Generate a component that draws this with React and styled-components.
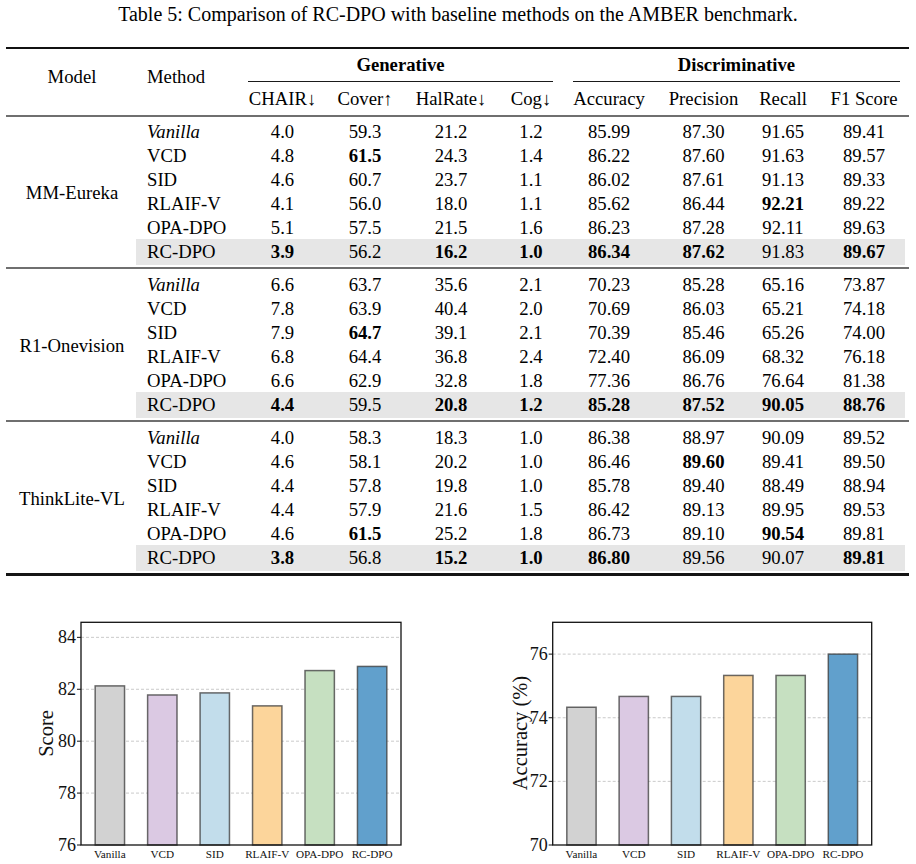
import React from "react";
import styled, { createGlobalStyle } from "styled-components";

const GlobalStyle = createGlobalStyle`
  html, body { margin: 0; padding: 0; background: #fff; }
  body { font-family: "Liberation Serif", "Times New Roman", serif; color: #000; }
`;

const NUM_COLS = "75px 90px 82px 78px 78px 111px 48px 98px";

const Page = styled.div`
  width: 916px;
  height: 864px;
  overflow: hidden;
  padding-top: 2px;
  box-sizing: border-box;
`;

const Caption = styled.div`
  text-align: center;
  font-size: 20px;
  line-height: 24px;
  height: 24px;
  margin-bottom: 21px;
`;

const Table = styled.div`
  margin-left: 6px;
  width: 903px;
  font-size: 18.7px;
  line-height: 24px;
`;

const Rule = styled.div`
  height: ${(p) => p.$h}px;
  background: ${(p) => p.$c};
`;

const Header = styled.div`
  display: flex;
  height: 66px;
`;

const HeadLabel = styled.div`
  width: ${(p) => p.$w}px;
  box-sizing: border-box;
  padding-top: 16px;
  padding-left: ${(p) => p.$pl || 0}px;
  text-align: ${(p) => p.$align};
`;

const HeadRight = styled.div`
  width: 660px;
  display: flex;
  flex-direction: column;
`;

const GroupHeads = styled.div`
  display: grid;
  grid-template-columns: 325px 335px;
  padding-top: 4px;
`;

const GroupHead = styled.div`
  margin: 0 ${(p) => p.$mr}px 0 ${(p) => p.$ml}px;
  text-align: center;
  font-weight: bold;
  padding-bottom: 4px;
  border-bottom: 1px solid #1a1a1a;
`;

const SubHeads = styled.div`
  display: grid;
  grid-template-columns: ${NUM_COLS};
  margin-top: 5px;
`;

const Cell = styled.div`
  display: flex;
  align-items: center;
  justify-content: center;
  white-space: nowrap;
  padding-left: ${(p) => p.$pl || 0}px;
  font-weight: ${(p) => (p.$bold ? "bold" : "normal")};
`;

const MethodCell = styled.div`
  display: flex;
  align-items: center;
  padding-left: 11px;
  white-space: nowrap;
  font-style: ${(p) => (p.$italic ? "italic" : "normal")};
`;

const GroupBlock = styled.div`
  display: flex;
  padding: ${(p) => p.$pt}px 0 2px 0;
`;

const ModelName = styled.div`
  width: 130px;
  box-sizing: border-box;
  padding-left: 2px;
  display: flex;
  align-items: center;
  justify-content: center;
  white-space: nowrap;
`;

const Rows = styled.div`
  width: 769px;
  display: flex;
  flex-direction: column;
`;

const Row = styled.div`
  display: grid;
  grid-template-columns: 109px ${NUM_COLS};
  height: ${(p) => (p.$hl ? 26 : 24)}px;
  margin-top: ${(p) => (p.$hl ? -1 : 0)}px;
  background: ${(p) => (p.$hl ? "#e6e6e6" : "transparent")};
`;

const ChartsRow = styled.div`
  display: grid;
  grid-template-columns: 458px 458px;
  margin-top: 24px;
`;

const ChartSvg = styled.svg`
  display: block;
  width: 458px;
  height: 264px;
`;

const TickText = styled.text`
  font-family: "Liberation Serif", "Times New Roman", serif;
  font-size: 18px;
  fill: #111;
`;

const XTickText = styled.text`
  font-family: "Liberation Serif", "Times New Roman", serif;
  font-size: 11.2px;
  fill: #111;
`;

const AxisLabel = styled.text`
  font-family: "Liberation Serif", "Times New Roman", serif;
  font-size: 20.5px;
  fill: #111;
`;

const SUBHEADS = ["CHAIR↓", "Cover↑", "HalRate↓", "Cog↓", "Accuracy", "Precision", "Recall", "F1 Score"];
const METHODS = ["Vanilla", "VCD", "SID", "RLAIF-V", "OPA-DPO", "RC-DPO"];

const GROUPS = [
  {
    model: "MM-Eureka",
    rows: [
      ["4.0", "59.3", "21.2", "1.2", "85.99", "87.30", "91.65", "89.41"],
      ["4.8", "*61.5", "24.3", "1.4", "86.22", "87.60", "91.63", "89.57"],
      ["4.6", "60.7", "23.7", "1.1", "86.02", "87.61", "91.13", "89.33"],
      ["4.1", "56.0", "18.0", "1.1", "85.62", "86.44", "*92.21", "89.22"],
      ["5.1", "57.5", "21.5", "1.6", "86.23", "87.28", "92.11", "89.63"],
      ["*3.9", "56.2", "*16.2", "*1.0", "*86.34", "*87.62", "91.83", "*89.67"],
    ],
  },
  {
    model: "R1-Onevision",
    rows: [
      ["6.6", "63.7", "35.6", "2.1", "70.23", "85.28", "65.16", "73.87"],
      ["7.8", "63.9", "40.4", "2.0", "70.69", "86.03", "65.21", "74.18"],
      ["7.9", "*64.7", "39.1", "2.1", "70.39", "85.46", "65.26", "74.00"],
      ["6.8", "64.4", "36.8", "2.4", "72.40", "86.09", "68.32", "76.18"],
      ["6.6", "62.9", "32.8", "1.8", "77.36", "86.76", "76.64", "81.38"],
      ["*4.4", "59.5", "*20.8", "*1.2", "*85.28", "*87.52", "*90.05", "*88.76"],
    ],
  },
  {
    model: "ThinkLite-VL",
    rows: [
      ["4.0", "58.3", "18.3", "1.0", "86.38", "88.97", "90.09", "89.52"],
      ["4.6", "58.1", "20.2", "1.0", "86.46", "*89.60", "89.41", "89.50"],
      ["4.4", "57.8", "19.8", "1.0", "85.78", "89.40", "88.49", "88.94"],
      ["4.4", "57.9", "21.6", "1.5", "86.42", "89.13", "89.95", "89.53"],
      ["4.6", "*61.5", "25.2", "1.8", "86.73", "89.10", "*90.54", "89.81"],
      ["*3.8", "56.8", "*15.2", "*1.0", "*86.80", "89.56", "90.07", "*89.81"],
    ],
  },
];

const BAR_COLORS = ["#d2d2d2", "#dbc9e3", "#c2ddeb", "#fcd59b", "#c6e0c1", "#61a0cc"];

function BarChart({ frame, yMin, yMax, ticks, values, ylabel, labelPos }) {
  const { x0, x1, y0, y1 } = frame;
  const sy = (v) => y1 - ((v - yMin) / (yMax - yMin)) * (y1 - y0);
  const step = (x1 - x0) / 6.1;
  const cx = (i) => x0 + (i + 0.55) * step;
  const bw = step * 0.56;
  return (
    <ChartSvg viewBox="0 0 458 264">
      {ticks
        .filter((t) => t !== yMin)
        .map((t) => (
          <line key={"g" + t} x1={x0} x2={x1} y1={sy(t)} y2={sy(t)} stroke="#bdbdbd" strokeWidth="0.8" strokeDasharray="3 2" />
        ))}
      {values.map((v, i) => (
        <rect
          key={i}
          x={cx(i) - bw / 2}
          y={sy(v)}
          width={bw}
          height={y1 - sy(v)}
          fill={BAR_COLORS[i]}
          stroke="#3a3a3a"
          strokeOpacity="0.75"
          strokeWidth="1.5"
        />
      ))}
      <rect x={x0} y={y0} width={x1 - x0} height={y1 - y0} fill="none" stroke="#111" strokeWidth="1.3" />
      {ticks.map((t) => (
        <g key={"t" + t}>
          <line x1={x0 - 4} x2={x0} y1={sy(t)} y2={sy(t)} stroke="#111" strokeWidth="1" />
          <TickText x={x0 - 5} y={sy(t)} textAnchor="end" dominantBaseline="central">
            {t}
          </TickText>
        </g>
      ))}
      {METHODS.map((m, i) => (
        <XTickText key={m} x={cx(i)} y={258} textAnchor="middle">
          {m}
        </XTickText>
      ))}
      <AxisLabel
        x={labelPos[0]}
        y={labelPos[1]}
        textAnchor="middle"
        dominantBaseline="central"
        transform={`rotate(-90 ${labelPos[0]} ${labelPos[1]})`}
      >
        {ylabel}
      </AxisLabel>
    </ChartSvg>
  );
}

function Value({ v, last }) {
  const bold = v.startsWith("*");
  return (
    <Cell $bold={bold} $pl={last ? 16 : 0}>
      {bold ? v.slice(1) : v}
    </Cell>
  );
}

export default function App() {
  return (
    <Page>
      <GlobalStyle />
      <Caption>Table 5: Comparison of RC-DPO with baseline methods on the AMBER benchmark.</Caption>
      <Table>
        <Rule $h={2} $c="#111" />
        <Header>
          <HeadLabel $w={130} $pl={2} $align="center">
            Model
          </HeadLabel>
          <HeadLabel $w={109} $pl={11} $align="left">
            Method
          </HeadLabel>
          <HeadRight>
            <GroupHeads>
              <GroupHead $ml={3} $mr={17}>
                Generative
              </GroupHead>
              <GroupHead $ml={3} $mr={5}>
                Discriminative
              </GroupHead>
            </GroupHeads>
            <SubHeads>
              {SUBHEADS.map((h, i) => (
                <Cell key={h} $pl={i === 7 ? 16 : 0}>
                  {h}
                </Cell>
              ))}
            </SubHeads>
          </HeadRight>
        </Header>
        {GROUPS.map((g, gi) => (
          <React.Fragment key={g.model}>
            <Rule $h={2} $c="#6f6f6f" />
            <GroupBlock $pt={gi === 0 ? 3 : 4}>
              <ModelName>{g.model}</ModelName>
              <Rows>
                {g.rows.map((r, ri) => (
                  <Row key={ri} $hl={ri === 5}>
                    <MethodCell $italic={ri === 0}>{METHODS[ri]}</MethodCell>
                    {r.map((v, ci) => (
                      <Value key={ci} v={v} last={ci === 7} />
                    ))}
                  </Row>
                ))}
              </Rows>
            </GroupBlock>
          </React.Fragment>
        ))}
        <Rule $h={3} $c="#151515" />
      </Table>
      <ChartsRow>
        <BarChart
          frame={{ x0: 81, x1: 401, y0: 22.3, y1: 245 }}
          yMin={76}
          yMax={84.58}
          ticks={[76, 78, 80, 82, 84]}
          values={[82.13, 81.78, 81.86, 81.36, 82.72, 82.88]}
          ylabel="Score"
          labelPos={[45.7, 133.5]}
        />
        <BarChart
          frame={{ x0: 94.7, x1: 413.7, y0: 22.3, y1: 245 }}
          yMin={70}
          yMax={77}
          ticks={[70, 72, 74, 76]}
          values={[74.33, 74.67, 74.67, 75.33, 75.33, 76.0]}
          ylabel="Accuracy (%)"
          labelPos={[62, 133]}
        />
      </ChartsRow>
    </Page>
  );
}
